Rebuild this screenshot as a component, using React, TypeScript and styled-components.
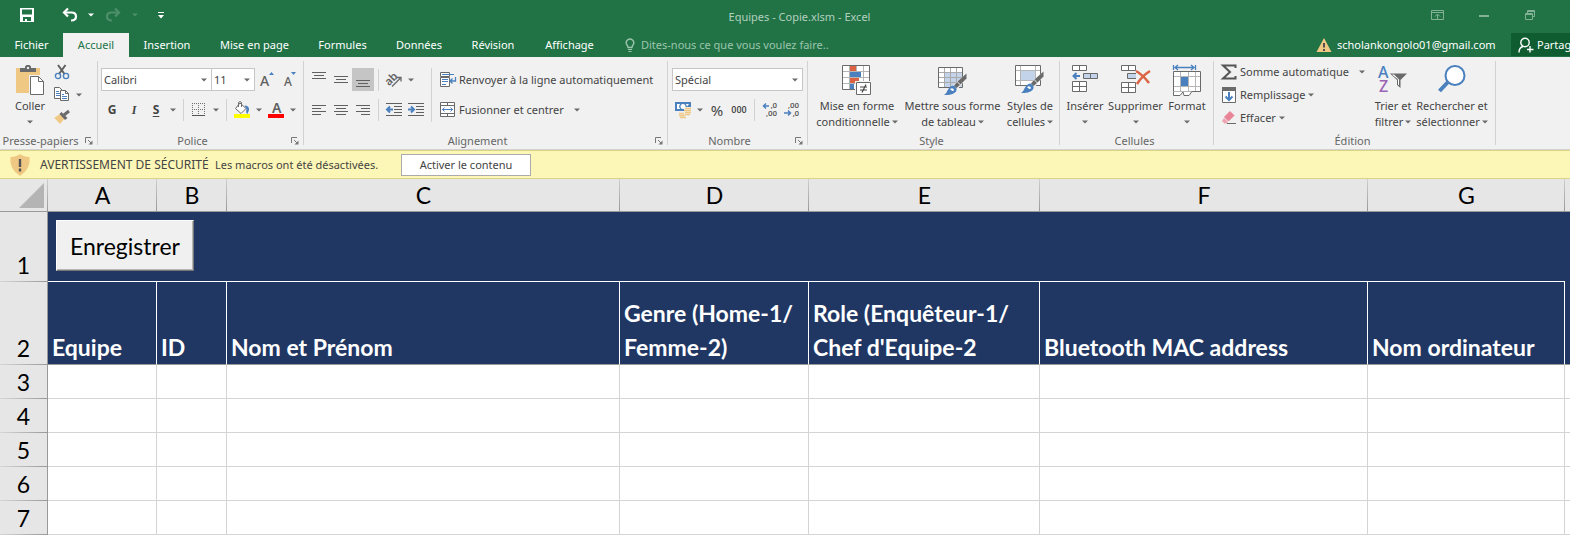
import React from 'react';
import styled, { createGlobalStyle, css } from 'styled-components';

const ui = '"Noto Sans", "Open Sans", sans-serif';
const sheetFont = 'Lato, "Open Sans", sans-serif';
const grey = '#6a6a6a';
const blue = '#4a80bd';
const tan = '#efc883';

const GlobalStyle = createGlobalStyle`
  * { box-sizing: border-box; }
  body { margin: 0; background: #fff; font: 11px/16px ${ui}; color: #444; overflow-x: hidden; }
  svg { display: block; flex: none; overflow: visible; }
`;

/* ---------- Shared controls ---------- */

const reset = css`
  margin: 0;
  padding: 0;
  border: 0;
  background: none;
  color: inherit;
  font: inherit;
  white-space: nowrap;
`;

const IconButton = styled.button<{ $active?: boolean }>`
  ${reset}
  display: flex;
  align-items: center;
  justify-content: center;
  width: 22px;
  height: ${(p) => (p.$active ? '23px' : '22px')};
  background: ${(p) => (p.$active ? '#c5c5c5' : 'none')};
`;

const CaretButton = styled(IconButton)`
  width: 12px;
`;

const Caret = ({ color = '#6a6a6a' }: { color?: string }) => (
  <svg width="6" height="4" viewBox="0 0 6 4" aria-hidden="true">
    <path d="M0 0.5h6L3 3.5z" fill={color} />
  </svg>
);

const Drop = ({ label }: { label: string }) => (
  <CaretButton aria-label={label}>
    <Caret />
  </CaretButton>
);

/* ---------- Title bar and tabs ---------- */

const Header = styled.header`
  background: #217346;
  color: #fff;
  overflow: hidden;
`;

const TitleBar = styled.div`
  display: flex;
  height: 33px;
`;

const QuickAccess = styled.div`
  display: flex;
  align-items: center;
  width: 172px;
  height: 30px;
  padding-left: 16px;
`;

const QuickButton = styled(IconButton)<{ $gap?: number }>`
  margin-right: ${(p) => p.$gap ?? 0}px;
`;

const DocTitle = styled.h1`
  flex: 1;
  margin: 0;
  font: 11px/34px ${ui};
  color: #b3d0bf;
  text-align: center;
`;

const WindowButtons = styled.div`
  display: flex;
  align-items: center;
  gap: 24px;
  width: 143px;
  height: 30px;
`;

const TabRow = styled.nav`
  display: flex;
  height: 24px;
`;

const Tab = styled.button<{ $width: number; $active?: boolean }>`
  ${reset}
  width: ${(p) => p.$width}px;
  line-height: 24px;
  background: ${(p) => (p.$active ? '#f1f1f1' : 'none')};
  color: ${(p) => (p.$active ? '#217346' : '#fff')};
`;

const TellMe = styled.label`
  display: flex;
  flex: 1;
  align-items: center;
  gap: 6px;
  padding-left: 15px;
`;

const TellMeInput = styled.input`
  ${reset}
  width: 220px;
  outline: none;
  color: #fff;
  &::placeholder { color: #9dc4ad; opacity: 1; }
`;

const Account = styled.button`
  ${reset}
  display: flex;
  align-items: center;
  gap: 5px;
  width: 195px;
`;

const Share = styled.button`
  ${reset}
  display: flex;
  align-items: center;
  gap: 3px;
  width: 59px;
  height: 23px;
  padding-left: 7px;
  overflow: hidden;
  background: #0e5c2f;
`;

/* ---------- Ribbon ---------- */

const Ribbon = styled.div`
  display: flex;
  height: 93px;
  background: #f1f1f1;
  border-bottom: 1px solid #d2d2d2;
  overflow: hidden;
`;

const GroupBox = styled.section<{ $width: number }>`
  display: flex;
  flex: none;
  flex-direction: column;
  width: ${(p) => p.$width}px;
`;

const GroupSeparator = styled.div`
  flex: none;
  width: 1px;
  margin: 4px 0;
  background: #d2d2d2;
`;

const GroupBody = styled.div<{ $inset: number }>`
  display: flex;
  flex: 1;
  padding-left: ${(p) => p.$inset}px;
`;

const GroupFooter = styled.div`
  display: flex;
  align-items: center;
  height: 17px;
  padding-right: 4px;
  color: #666;
`;

const GroupLabel = styled.span`
  flex: 1;
  text-align: center;
  white-space: nowrap;
`;

const Launcher = styled.button`
  ${reset}
  padding-left: 4px;
`;

function Group(props: { label: string; width: number; inset: number; launcher?: boolean; children: React.ReactNode }) {
  return (
    <>
      <GroupBox $width={props.width} aria-label={props.label}>
        <GroupBody $inset={props.inset}>{props.children}</GroupBody>
        <GroupFooter>
          <GroupLabel>{props.label}</GroupLabel>
          {props.launcher && (
            <Launcher aria-label={`Options ${props.label}`}>
              <svg width="8" height="8" viewBox="0 0 8 8">
                <path d="M6 .5H.5V6M3 3l3 3" fill="none" stroke="#777" />
                <path d="M7.500 3.500v4h-4z" fill="#777" />
              </svg>
            </Launcher>
          )}
        </GroupFooter>
      </GroupBox>
      <GroupSeparator />
    </>
  );
}

const ControlRows = styled.div`
  display: flex;
  flex-direction: column;
  gap: 7px;
  padding-top: 11px;
`;

const LabelledRows = styled(ControlRows)`
  padding-left: 4px;
`;

const ControlRow = styled.div`
  display: flex;
  align-items: center;
  height: 23px;
`;

const Divider = styled.span`
  width: 1px;
  height: 22px;
  margin: 0 4px;
  background: #d2d2d2;
`;

const TallDivider = styled(Divider)`
  height: 54px;
  margin-top: 11px;
`;

const Combo = styled.label<{ $width: number }>`
  display: flex;
  align-items: center;
  width: ${(p) => p.$width}px;
  height: 23px;
  padding: 0 4px 0 2px;
  background: #fff;
  border: 1px solid #c6c6c6;
  & + & { border-left: 0; }
`;

const Select = styled.select`
  ${reset}
  flex: 1;
  min-width: 0;
  appearance: none;
  outline: none;
`;

function ComboBox({ label, value, width }: { label: string; value: string; width: number }) {
  return (
    <Combo $width={width}>
      <Select aria-label={label} defaultValue={value}>
        <option>{value}</option>
      </Select>
      <Caret />
    </Combo>
  );
}

const WideButton = styled.button<{ $gap?: number }>`
  ${reset}
  display: flex;
  align-items: center;
  gap: 3px;
  height: 23px;
  margin-right: ${(p) => p.$gap ?? 0}px;
`;

const ListColumn = styled.div<{ $width: number }>`
  display: flex;
  flex-direction: column;
  width: ${(p) => p.$width}px;
  padding-top: 3px;
`;

const ListRow = styled.div`
  display: flex;
  align-items: center;
  height: 23px;
`;

const Large = styled.button<{ $width: number }>`
  ${reset}
  display: flex;
  flex-direction: column;
  align-items: center;
  width: ${(p) => p.$width}px;
  padding-top: 8px;
`;

const LargeIcon = styled.span`
  display: flex;
  height: 33px;
`;

const LargeLine = styled.span`
  display: flex;
  align-items: center;
  justify-content: center;
  gap: 2px;
  height: 16px;
`;

function LargeButton(props: { width: number; icon: React.ReactNode; first: string; second?: string }) {
  return (
    <Large $width={props.width}>
      <LargeIcon>{props.icon}</LargeIcon>
      <LargeLine>{props.first}</LargeLine>
      <LargeLine>
        {props.second}
        <Caret />
      </LargeLine>
    </Large>
  );
}

const Letter = styled.span<{ $italic?: boolean; $underline?: boolean }>`
  font-size: 12px;
  font-weight: 700;
  font-style: ${(p) => (p.$italic ? 'italic' : 'normal')};
  font-family: ${(p) => (p.$italic ? '"Liberation Serif", serif' : ui)};
  text-decoration: ${(p) => (p.$underline ? 'underline' : 'none')};
  text-underline-offset: 2px;
`;

const Percent = styled.span`
  font-size: 15px;
`;

const Zeros = styled.span`
  font: 500 9px/16px Roboto, sans-serif;
`;

/* ---------- Icons ---------- */

const PasteIcon = () => (
  <svg width="30" height="31" viewBox="0 0 30 31">
    <path d="M1 3h24v25H1z" fill={tan} />
    <path d="M5 7V3h5V1.500L11.500 0h3L16 1.500V3h5v4z" fill={grey} />
    <path d="M12 2h2v2h-2z" fill="#f1f1f1" />
    <path d="M14 10h11v2h5v19H14z" fill="#f1f1f1" />
    <path d="M15.500 11.500h8l5 5v13h-13z" fill="#fff" stroke={grey} />
    <path d="M23.500 11.500v5h5" fill="none" stroke={grey} />
  </svg>
);

const CutIcon = () => (
  <svg width="16" height="16" viewBox="0 0 16 16">
    <path d="M4 1l6.500 9M11.500 1L5 10" fill="none" stroke="#606060" strokeWidth="2" />
    <circle cx="4" cy="12" r="2.600" fill="none" stroke={blue} strokeWidth="1.400" />
    <circle cx="12" cy="12" r="2.600" fill="none" stroke={blue} strokeWidth="1.400" />
  </svg>
);

const CopyIcon = () => (
  <svg width="16" height="15" viewBox="0 0 16 15">
    <path d="M.5.5h5l3 3v8h-8z" fill="#fff" stroke={grey} />
    <path d="M2 4.500h3M2 6.500h4M2 8.500h4" stroke={blue} />
    <path d="M6.500 3.500h5l3 3v7h-8z" fill="#fff" stroke={grey} />
    <path d="M11.500 3.500v3h3" fill="none" stroke={grey} />
    <path d="M8 7.500h2M8 9.500h5M8 11.500h5" stroke={blue} />
  </svg>
);

const FormatPainterIcon = () => (
  <svg width="16" height="15" viewBox="0 0 16 15">
    <path d="M6 4L0 8c2 1 4 4 6 6l5-6z" fill={tan} />
    <path d="M5.500 4l2-2 6 6-2.500 2z" fill={grey} />
    <path d="M10 5l5-4" stroke={grey} strokeWidth="3" />
  </svg>
);

const FontSizeIcon = ({ grow }: { grow?: boolean }) => (
  <svg width="16" height="18" viewBox="0 0 16 18">
    <text x={grow ? 2 : 4} y="15" fontFamily="Noto Sans" fontSize={grow ? 14 : 12} fontWeight="500" fill="#606060">A</text>
    <path d={grow ? 'M11 4l2.500-3L16 4z' : 'M11 1h5l-2.500 3z'} fill={blue} />
  </svg>
);

const BordersIcon = () => (
  <svg width="14" height="14" viewBox="0 0 14 14" shapeRendering="crispEdges">
    <path d="M0 .5h13M0 6.500h13M.5 0v12M6.500 0v12M12.500 0v12" fill="none" stroke="#707070" strokeDasharray="1 1" />
    <path d="M0 12.500h13" stroke="#555" />
  </svg>
);

const FillIcon = () => (
  <svg width="18" height="17" viewBox="0 0 18 17">
    <path d="M7 2l6 5.500-5 5L2.500 7.500z" fill="#fff" stroke={grey} />
    <path d="M5.500 6V1.500Q7-.5 8.500 1.500V6" fill="none" stroke={grey} />
    <path d="M11.500 4.500q5 0 4.500 4.500l-1.500 4q-2-1-1-5z" fill={blue} />
    <path d="M1 13h16v4H1z" fill="#ff0" />
  </svg>
);

const FontColorIcon = () => (
  <svg width="18" height="17" viewBox="0 0 18 17">
    <text x="5" y="12" fontFamily="Noto Sans" fontSize="14" fontWeight="600" fill="#606060">A</text>
    <path d="M1 13h16v4H1z" fill="#f00" />
  </svg>
);

const LinesIcon = ({ d, shift = 0 }: { d: string; shift?: number }) => (
  <svg width="14" height="16" viewBox={`0 ${-shift} 14 16`} shapeRendering="crispEdges">
    <path d={d} stroke="#606060" />
  </svg>
);

const threeLines = 'M0 .5h14M2 3.500h10M0 6.500h14';

const OrientationIcon = () => (
  <svg width="18" height="17" viewBox="0 0 18 17">
    <text x="0" y="12" fontFamily="Noto Sans" fontSize="11" fontWeight="600" fill="#606060" transform="rotate(-45 6 9)">ab</text>
    <path d="M7 15.500l8.500-8.500M12 6.500h4v4" fill="none" stroke={grey} strokeWidth="1.300" />
  </svg>
);

const IndentIcon = ({ out }: { out?: boolean }) => (
  <svg width="16" height="14" viewBox="0 0 16 14">
    <path d="M0 .5h16M8 3.500h8M8 6.500h8M8 9.500h8M0 12.500h16" stroke="#606060" />
    <path d={out ? 'M7 6.500H2M4 3.500l-3 3 3 3' : 'M0 6.500h5M3 3.500l3 3-3 3'} fill="none" stroke={blue} strokeWidth="2" />
  </svg>
);

const WrapIcon = () => (
  <svg width="16" height="16" viewBox="0 0 16 16">
    <path d="M.5.5h9v4h-9zM.5 5.500h9v9h-9z" fill="#fff" stroke={grey} />
    <path d="M2 2.500h12M2 7.500h6M2 9.500h6M2 12.500h4" stroke={blue} />
    <path d="M15.500 5v4h-5M12.500 6.500L10 9l2.500 2.500" fill="none" stroke={blue} strokeWidth="1.300" />
  </svg>
);

const MergeIcon = () => (
  <svg width="16" height="15" viewBox="0 0 16 15">
    <path d="M.5.5h14v14H.5zM.5 3.500h14M.5 11.500h14M7.500.5v3M7.500 11.500v3" fill="#fff" stroke={grey} />
    <path d="M2 7.500h11M4.500 5.500l-2 2 2 2M10.500 5.500l2 2-2 2" fill="none" stroke={blue} />
  </svg>
);

const MoneyIcon = () => (
  <svg width="17" height="16" viewBox="0 0 17 16">
    <path d="M0 0h16v9H0z" fill={blue} />
    <path d="M2 2h3l-1 2.500L5 7H2zM14 2h-3l1 2.500" fill="#fff" />
    <circle cx="8" cy="4.500" r="2.500" fill="#fff" />
    <path d="M9 5h8v10H9z" fill="#f1f1f1" />
    <path d="M10 6.500h6M9 8.500h7M10 10.500h6M10 12.500h5M4 11.500h5M4 13.500h6M5 15.500h6" stroke={tan} strokeWidth="1.400" />
  </svg>
);

const DecimalIcon = ({ add }: { add?: boolean }) => (
  <svg width="16" height="15" viewBox="0 0 16 15" fontFamily="Roboto" fontSize="8" fontWeight="500" fill="#555">
    <text x="15" y="6" textAnchor="end">{add ? ',0' : ',00'}</text>
    <text x="15" y="14" textAnchor="end">{add ? ',00' : ',0'}</text>
    <path d={add ? 'M7 4H2M4 1.500L1.500 4 4 6.500' : 'M0 11h6M4 8.500L6.500 11 4 13.500'} fill="none" stroke={blue} strokeWidth="1.500" />
  </svg>
);

const ConditionalIcon = () => (
  <svg width="30" height="30" viewBox="0 0 30 30">
    <path d="M.5.5h27v24H.5z" fill="#fff" stroke={grey} />
    <path d="M7.500 1v23M14.500 1v23M21.500 1v23M1 6.500h26M1 12.500h26M1 18.500h26" stroke="#b5b5b5" />
    <path d="M8 1h6v5H8zM8 13h9v5H8z" fill="#db6243" />
    <path d="M8 7h11v5H8zM8 19h4v5H8z" fill={blue} />
    <path d="M13 16h17v14H13z" fill="#f1f1f1" />
    <path d="M14.500 17.500h14v12h-14z" fill="#fff" stroke={grey} />
    <path d="M18 22h7M18 25h7M24 19.500l-4 8" stroke="#444" strokeWidth="1.200" />
  </svg>
);

const Brush = () => (
  <>
    <path d="M28 7v5L19 23l-5-4z" fill="#f1f1f1" />
    <path d="M28.500 6.500v5l-6 6-3-3z" fill={grey} />
    <path d="M19 15l3 3-3.500 3-2.500-2.500z" fill={grey} />
    <path d="M15 18.500c3 1 4.500 3 3 6-2.500 3-7 3.500-12 3.500 4-2 3-8 9-9.500z" fill={blue} />
    <path d="M12 22q3-2 4 1-1 2-3 0z" fill="#fff" />
  </>
);

const TableStyleIcon = () => (
  <svg width="30" height="30" viewBox="0 -2 30 30">
    <path d="M.5.5h24v20H.5z" fill="#fff" stroke={grey} />
    <path d="M7 6h17v14H7z" fill="#c3d4ea" />
    <path d="M6.500 1v19M12.500 1v19M18.500 1v19M1 5.500h23M1 10.500h23M1 15.500h23" stroke="#a9a9a9" />
    <Brush />
  </svg>
);

const CellStyleIcon = () => (
  <svg width="30" height="30" viewBox="0 0 30 30">
    <path d="M.5.5h25v20H.5z" fill="#fff" stroke={grey} />
    <path d="M5.500 1v19M20.500 1v19M1 5.500h24M1 15.500h24" stroke="#b5b5b5" />
    <path d="M6 6h14v9H6z" fill="#c3d4ea" />
    <Brush />
  </svg>
);

const InsertIcon = () => (
  <svg width="27" height="28" viewBox="0 0 27 28">
    <path d="M.5.5h14v5H.5zM7.500.5v5M.5 16.500h14v10H.5zM7.500 16.500v10M.5 21.500h14" fill="#fff" stroke={grey} />
    <path d="M11.500 8.500h14v5h-14zM18.500 8.500v5" fill="#c3d4ea" stroke={grey} />
    <path d="M8 11H2M4.500 8L1.500 11l3 3" fill="none" stroke={blue} strokeWidth="2" />
  </svg>
);

const DeleteIcon = () => (
  <svg width="30" height="28" viewBox="0 0 30 28">
    <path d="M.5.5h14v5H.5zM7.500.5v5M.5 17.500h14v10H.5zM7.500 17.500v10M.5 22.500h14" fill="#fff" stroke={grey} />
    <path d="M15 8.500H6.500v5H15" fill="#c3d4ea" stroke={grey} />
    <path d="M15 6q7 4 13 12M29 6q-8 5-13 13" fill="none" stroke="#db6243" strokeWidth="2.500" />
  </svg>
);

const FormatIcon = () => (
  <svg width="28" height="31" viewBox="0 -1 28 31">
    <path d="M.5 -1v5M22.500 -1v5M2 1.500h19M5 -1L2 1.500 5 4M18 -1l3 2.500L18 4" fill="none" stroke={blue} strokeWidth="1.300" />
    <path d="M.5 5.500h27v20H.5z" fill="#fff" stroke={grey} />
    <path d="M7.500 6v19M15.500 6v19M22.500 6v19M1 10.500h26M1 20.500h26" stroke="#b5b5b5" />
    <path d="M8 11h7v9H8z" fill={blue} />
    <path d="M.5 25.500v4H7l3-3.500 1 3.500h5l3-4" fill="#fff" stroke={grey} />
  </svg>
);

const SumIcon = () => (
  <svg width="16" height="16" viewBox="0 0 16 16">
    <path d="M14.500 4V1.500H2L9 8l-7 6.500h12.500V12" fill="none" stroke="#555" strokeWidth="2" />
  </svg>
);

const FillDownIcon = () => (
  <svg width="16" height="16" viewBox="0 0 16 16">
    <path d="M1.500.5h13v15h-13z" fill="#fff" stroke={grey} />
    <path d="M1 0h14v4H1z" fill={grey} />
    <path d="M8 5v8M4.500 9.500L8 13l3.500-3.500" fill="none" stroke={blue} strokeWidth="2" />
  </svg>
);

const EraserIcon = () => (
  <svg width="16" height="16" viewBox="0 0 16 16">
    <path d="M9 1.500l4 4-5.500 5.500-4-4z" fill="#e98496" stroke="#e98496" strokeLinejoin="round" />
    <path d="M3 8l4 4-1.500 1.500H3.500L1 11z" fill="#eea4b0" />
    <path d="M6 13.500h9" stroke={grey} />
  </svg>
);

const SortIcon = () => (
  <svg width="30" height="30" viewBox="0 0 30 30" fontFamily="Noto Sans" fontSize="16" fontWeight="500">
    <text x="0" y="13" fill={blue}>A</text>
    <text x="1" y="27" fill="#9a64b4">Z</text>
    <path d="M12 8.500h17l-6.500 6.500v8l-3.500-3v-5z" fill={grey} />
    <path d="M14 9.500h2l5 5v6l-1-1v-5z" fill="#fff" />
  </svg>
);

const FindIcon = () => (
  <svg width="28" height="28" viewBox="0 0 28 28">
    <path d="M10 17l-8.500 9" stroke={blue} strokeWidth="4" />
    <circle cx="17" cy="10.500" r="9.500" fill="#fff" stroke={blue} strokeWidth="2" />
  </svg>
);

const SaveIcon = () => (
  <svg width="14" height="14" viewBox="0 0 14 14">
    <path fillRule="evenodd" d="M0 0h14v14H0zM2 1.500v5h10v-5zM3 9v4h2v-2h2v2h4V9z" fill="#fff" />
  </svg>
);

const UndoIcon = ({ faded, flip }: { faded?: boolean; flip?: boolean }) => (
  <svg width="16" height="14" viewBox="0 0 16 14">
    <g transform={flip ? 'matrix(-1 0 0 1 16 0)' : undefined} fill="none" stroke={faded ? '#4e8f6b' : '#fff'} strokeWidth="2.200">
      <path d="M6 .5L2 4.500l4 4" />
      <path d="M2 4.500h7.500q4.500 0 4.500 4t-5 4" />
    </g>
  </svg>
);

const CustomizeIcon = () => (
  <svg width="6" height="7" viewBox="0 0 6 7">
    <path d="M0 .5h6" stroke="#fff" />
    <path d="M0 3h6L3 6.500z" fill="#fff" />
  </svg>
);

const RibbonDisplayIcon = () => (
  <svg width="14" height="11" viewBox="0 0 14 11">
    <path d="M.5.5h12v9H.5zM.5 2.500h12M6.500 9V4.500M4 6.500l2.500-2.500L9 6.500" fill="none" stroke="#82b195" />
  </svg>
);

const MinimizeIcon = () => (
  <svg width="10" height="10" viewBox="0 0 10 10">
    <path d="M0 6h10" stroke="#82b195" strokeWidth="2" />
  </svg>
);

const RestoreIcon = () => (
  <svg width="11" height="11" viewBox="0 0 11 11">
    <path d="M.5 3.500h7v6h-7zM.5 4.500h7M2.500 3V.5h7v6H8M2.500 1.500h7" fill="none" stroke="#82b195" />
  </svg>
);

const BulbIcon = () => (
  <svg width="10" height="14" viewBox="0 0 10 14">
    <path d="M3 9.500Q3 8 2 7a3.700 3.700 0 1 1 6 0Q7 8 7 9.500z" fill="none" stroke="#9dc4ad" strokeWidth="1.400" />
    <path d="M3 11.500h4M3.500 13.500h3" stroke="#9dc4ad" />
  </svg>
);

const WarningIcon = () => (
  <svg width="16" height="14" viewBox="0 0 16 14">
    <path d="M8 0l7.500 14H.5z" fill={tan} />
    <path d="M8 5v4.500M8 11v2" stroke="#444" strokeWidth="1.800" />
  </svg>
);

const PersonIcon = () => (
  <svg width="16" height="16" viewBox="0 0 16 16">
    <circle cx="7" cy="5.500" r="4.200" fill="none" stroke="#fff" strokeWidth="1.400" />
    <path d="M1 15.500q0-5 4-6M12 9v6.500M9 12.500h6.500" fill="none" stroke="#fff" strokeWidth="1.400" />
  </svg>
);

const ShieldIcon = () => (
  <svg width="20" height="22" viewBox="0 0 20 22">
    <path d="M10 0q4 3 9.500 3 1.500 12-9.500 19Q-1 15 .5 3 6 3 10 0z" fill={tan} />
    <path d="M10 5v8M10 14.500v3" stroke="#555" strokeWidth="2.400" />
  </svg>
);

/* ---------- Message bar ---------- */

const MessageBar = styled.div`
  display: flex;
  align-items: center;
  height: 29px;
  padding-left: 10px;
  background: #fcf7b6;
  border: solid #d9d584;
  border-width: 1px 0;
`;

const MessageTitle = styled.strong`
  width: 175px;
  margin-left: 10px;
  font-size: 12px;
  font-weight: 400;
  white-space: nowrap;
`;

const MessageText = styled.span`
  width: 186px;
`;

const EnableButton = styled.button`
  ${reset}
  width: 130px;
  height: 22px;
  background: #fff;
  border: 1px solid #ababab;
`;

/* ---------- Sheet ---------- */

const Sheet = styled.table`
  width: 100%;
  table-layout: fixed;
  border-collapse: separate;
  border-spacing: 0;
  font: 23px/34px ${sheetFont};
  color: #000;
`;

const Col = styled.col<{ $width?: number }>`
  width: ${(p) => (p.$width ? `${p.$width}px` : 'auto')};
`;

const ColumnHeader = styled.th`
  height: 33px;
  padding: 0;
  font-weight: 400;
  line-height: 32px;
  background: linear-gradient(#cfcfcf, #999) right / 1px 100% no-repeat #e6e6e6;
  border-bottom: 1px solid #999;
  &:last-child { background: #e6e6e6; }
`;

const Corner = styled(ColumnHeader)`
  vertical-align: bottom;
  & > button { ${reset} display: block; margin: 0 4px 3px auto; }
`;

const RowHeader = styled.th`
  padding: 0;
  font-weight: 400;
  text-align: center;
  vertical-align: bottom;
  background: linear-gradient(to right, #d6d6d6, #999) bottom / 100% 1px no-repeat #e6e6e6;
  border-right: 1px solid #999;
`;

const BodyRow = styled.tr`
  height: 34px;
`;

const Cell = styled.td`
  padding: 0;
  border: solid #d4d4d4;
  border-width: 0 1px 1px 0;
  &:last-child { border-right: 0; }
`;

const BannerRow = styled.tr`
  height: 70px;
`;

const BannerCell = styled.td`
  padding: 8px;
  vertical-align: top;
  background: #203764;
  border-bottom: 1px solid #fff;
  &:last-child { border-bottom-color: #203764; }
`;

const HeadingRow = styled.tr`
  height: 83px;
`;

const Heading = styled.td`
  padding: 0 4px;
  font-weight: 700;
  color: #fff;
  white-space: pre;
  vertical-align: bottom;
  background: #203764;
  border-right: 1px solid #fff;
  border-bottom: 1px solid #999;
  &:last-child { border-right: 0; }
`;

const SaveButton = styled.button`
  ${reset}
  display: block;
  width: 138px;
  height: 51px;
  background: #f0f0f0;
  border: 1px solid;
  border-color: #fff #777 #777 #fff;
  box-shadow: inset -1px -1px #b5b5b5;
`;

const tabs: [string, number][] = [
  ['Fichier', 63], ['Accueil', 66], ['Insertion', 76], ['Mise en page', 99],
  ['Formules', 77], ['Données', 76], ['Révision', 72], ['Affichage', 81],
];

const columns: [string, number, string][] = [
  ['A', 109, 'Equipe'],
  ['B', 70, 'ID'],
  ['C', 393, 'Nom et Prénom'],
  ['D', 189, 'Genre (Home-1/\nFemme-2)'],
  ['E', 231, "Role (Enquêteur-1/\nChef d'Equipe-2"],
  ['F', 328, 'Bluetooth MAC address'],
  ['G', 197, 'Nom ordinateur'],
];

export default function App() {
  return (
    <>
      <GlobalStyle />
      <Header>
        <TitleBar>
          <QuickAccess>
            <QuickButton $gap={21} aria-label="Enregistrer"><SaveIcon /></QuickButton>
            <QuickButton aria-label="Annuler"><UndoIcon /></QuickButton>
            <QuickButton aria-label="Options d'annulation"><Caret color="#fff" /></QuickButton>
            <QuickButton aria-label="Rétablir"><UndoIcon faded flip /></QuickButton>
            <QuickButton $gap={5} aria-label="Options de rétablissement"><Caret color="#4e8f6b" /></QuickButton>
            <QuickButton aria-label="Personnaliser"><CustomizeIcon /></QuickButton>
          </QuickAccess>
          <DocTitle>Equipes - Copie.xlsm - Excel</DocTitle>
          <WindowButtons>
            <IconButton aria-label="Affichage du ruban"><RibbonDisplayIcon /></IconButton>
            <IconButton aria-label="Réduire"><MinimizeIcon /></IconButton>
            <IconButton aria-label="Restaurer"><RestoreIcon /></IconButton>
          </WindowButtons>
        </TitleBar>
        <TabRow>
          {tabs.map(([name, width]) => (
            <Tab key={name} $width={width} $active={name === 'Accueil'}>{name}</Tab>
          ))}
          <TellMe>
            <BulbIcon />
            <TellMeInput aria-label="Rechercher une commande" placeholder="Dites-nous ce que vous voulez faire.." />
          </TellMe>
          <Account><WarningIcon />scholankongolo01@gmail.com</Account>
          <Share><PersonIcon />Partager</Share>
        </TabRow>
      </Header>

      <Ribbon>
        <Group label="Presse-papiers" width={97} inset={9} launcher>
          <LargeButton width={42} icon={<PasteIcon />} first="Coller" />
          <ListColumn $width={40}>
            <ListRow><IconButton aria-label="Couper"><CutIcon /></IconButton></ListRow>
            <ListRow>
              <IconButton aria-label="Copier"><CopyIcon /></IconButton>
              <Drop label="Options de copie" />
            </ListRow>
            <ListRow><IconButton aria-label="Reproduire la mise en forme"><FormatPainterIcon /></IconButton></ListRow>
          </ListColumn>
        </Group>

        <Group label="Police" width={205} inset={3} launcher>
          <ControlRows>
            <ControlRow>
              <ComboBox label="Police" value="Calibri" width={111} />
              <ComboBox label="Taille" value="11" width={43} />
              <IconButton aria-label="Agrandir la police"><FontSizeIcon grow /></IconButton>
              <IconButton aria-label="Réduire la police"><FontSizeIcon /></IconButton>
            </ControlRow>
            <ControlRow>
              <IconButton aria-label="Gras"><Letter>G</Letter></IconButton>
              <IconButton aria-label="Italique"><Letter $italic>I</Letter></IconButton>
              <IconButton aria-label="Souligné"><Letter $underline>S</Letter></IconButton>
              <Drop label="Options de soulignement" />
              <Divider />
              <IconButton aria-label="Bordures"><BordersIcon /></IconButton>
              <Drop label="Options de bordures" />
              <Divider />
              <IconButton aria-label="Remplissage"><FillIcon /></IconButton>
              <Drop label="Couleurs de remplissage" />
              <IconButton aria-label="Couleur de police"><FontColorIcon /></IconButton>
              <Drop label="Couleurs de police" />
            </ControlRow>
          </ControlRows>
        </Group>

        <Group label="Alignement" width={363} inset={4} launcher>
          <ControlRows>
            <ControlRow>
              <IconButton aria-label="Aligner en haut"><LinesIcon d={threeLines} /></IconButton>
              <IconButton aria-label="Aligner au centre"><LinesIcon d={threeLines} shift={4} /></IconButton>
              <IconButton $active aria-label="Aligner en bas"><LinesIcon d={threeLines} shift={8} /></IconButton>
              <Divider />
              <IconButton aria-label="Orientation"><OrientationIcon /></IconButton>
              <Drop label="Options d'orientation" />
            </ControlRow>
            <ControlRow>
              <IconButton aria-label="Aligner à gauche"><LinesIcon d="M0 .5h14M0 3.500h9M0 6.500h14M0 9.500h9" shift={3} /></IconButton>
              <IconButton aria-label="Centrer"><LinesIcon d="M0 .5h14M2 3.500h10M0 6.500h14M2 9.500h10" shift={3} /></IconButton>
              <IconButton aria-label="Aligner à droite"><LinesIcon d="M0 .5h14M5 3.500h9M0 6.500h14M5 9.500h9" shift={3} /></IconButton>
              <Divider />
              <IconButton aria-label="Diminuer le retrait"><IndentIcon out /></IconButton>
              <IconButton aria-label="Augmenter le retrait"><IndentIcon /></IconButton>
            </ControlRow>
          </ControlRows>
          <TallDivider />
          <LabelledRows>
            <ControlRow><WideButton><WrapIcon />Renvoyer à la ligne automatiquement</WideButton></ControlRow>
            <ControlRow>
              <WideButton $gap={7}><MergeIcon />Fusionner et centrer</WideButton>
              <Drop label="Options de fusion" />
            </ControlRow>
          </LabelledRows>
        </Group>

        <Group label="Nombre" width={139} inset={4} launcher>
          <ControlRows>
            <ControlRow><ComboBox label="Format de nombre" value="Spécial" width={131} /></ControlRow>
            <ControlRow>
              <IconButton aria-label="Format comptabilité"><MoneyIcon /></IconButton>
              <Drop label="Options de comptabilité" />
              <IconButton><Percent>%</Percent></IconButton>
              <IconButton><Zeros>000</Zeros></IconButton>
              <Divider />
              <IconButton aria-label="Ajouter une décimale"><DecimalIcon add /></IconButton>
              <IconButton aria-label="Réduire les décimales"><DecimalIcon /></IconButton>
            </ControlRow>
          </ControlRows>
        </Group>

        <Group label="Style" width={251} inset={4}>
          <LargeButton width={90} icon={<ConditionalIcon />} first="Mise en forme" second="conditionnelle" />
          <LargeButton width={101} icon={<TableStyleIcon />} first="Mettre sous forme" second="de tableau" />
          <LargeButton width={54} icon={<CellStyleIcon />} first="Styles de" second="cellules" />
        </Group>

        <Group label="Cellules" width={153} inset={4}>
          <LargeButton width={42} icon={<InsertIcon />} first="Insérer" />
          <LargeButton width={59} icon={<DeleteIcon />} first="Supprimer" />
          <LargeButton width={44} icon={<FormatIcon />} first="Format" />
        </Group>

        <Group label="Édition" width={281} inset={7}>
          <ListColumn $width={152}>
            <ListRow><WideButton $gap={7}><SumIcon />Somme automatique</WideButton><Drop label="Autres fonctions" /></ListRow>
            <ListRow><WideButton><FillDownIcon />Remplissage<Caret /></WideButton></ListRow>
            <ListRow><WideButton><EraserIcon />Effacer<Caret /></WideButton></ListRow>
          </ListColumn>
          <LargeButton width={40} icon={<SortIcon />} first="Trier et" second="filtrer" />
          <LargeButton width={78} icon={<FindIcon />} first="Rechercher et" second="sélectionner" />
        </Group>
      </Ribbon>

      <MessageBar role="alert">
        <ShieldIcon />
        <MessageTitle>AVERTISSEMENT DE SÉCURITÉ</MessageTitle>
        <MessageText>Les macros ont été désactivées.</MessageText>
        <EnableButton>Activer le contenu</EnableButton>
      </MessageBar>

      <Sheet>
        <colgroup>
          <Col $width={48} />
          {columns.map(([letter, width]) => <Col key={letter} $width={width} />)}
          <Col />
        </colgroup>
        <thead>
          <tr>
            <Corner>
              <button aria-label="Tout sélectionner">
                <svg width="25" height="25" viewBox="0 0 25 25"><path d="M25 0v25H0z" fill="#b4b4b4" /></svg>
              </button>
            </Corner>
            {columns.map(([letter]) => <ColumnHeader key={letter} scope="col">{letter}</ColumnHeader>)}
            <ColumnHeader />
          </tr>
        </thead>
        <tbody>
          <BannerRow>
            <RowHeader scope="row">1</RowHeader>
            <BannerCell colSpan={columns.length}><SaveButton>Enregistrer</SaveButton></BannerCell>
            <BannerCell />
          </BannerRow>
          <HeadingRow>
            <RowHeader scope="row">2</RowHeader>
            {columns.map(([letter, , title]) => <Heading key={letter}>{title}</Heading>)}
            <Heading />
          </HeadingRow>
          {[3, 4, 5, 6, 7].map((n) => (
            <BodyRow key={n}>
              <RowHeader scope="row">{n}</RowHeader>
              {columns.map(([letter]) => <Cell key={letter} />)}
              <Cell />
            </BodyRow>
          ))}
        </tbody>
      </Sheet>
    </>
  );
}
